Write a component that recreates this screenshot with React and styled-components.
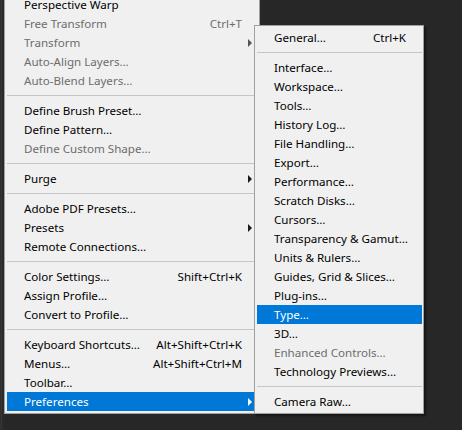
import React from "react";
import styled, { createGlobalStyle } from "styled-components";

const GlobalStyle = createGlobalStyle`
  html, body {
    margin: 0;
    padding: 0;
    background: #272727;
    overflow: hidden;
  }
  body {
    font-family: "Noto Sans", "Open Sans", sans-serif;
    font-size: 11.6px;
  }
`;

const Stage = styled.div`
  display: flex;
  padding-left: 4px;
  margin-top: -8px;
  height: 438px;
  background: linear-gradient(90deg, #2e2e2e 0 1px, #353535 1px 2px, #2a2a2a 2px 4px, transparent 4px);
`;

const MenuAnchor = styled.div`
  position: relative;
  align-self: flex-start;
`;

const Menu = styled.div`
  box-sizing: border-box;
  width: ${(p) => p.$width}px;
  background: #f0f0f0;
  border: 1px solid #a0a0a0;
  padding: 2px ${(p) => p.$padRight}px 2px 2px;
  display: flex;
  flex-direction: column;
`;

const SubMenu = styled(Menu)`
  position: absolute;
  left: 250px;
  top: 33px;
  box-shadow: 2px 2px 2px rgba(0, 0, 0, 0.45);
`;

const Row = styled.div`
  display: flex;
  align-items: center;
  height: 19px;
  padding-left: 17px;
  color: ${(p) => (p.$active ? "#ffffff" : p.$disabled ? "#6d6d6d" : "#000")};
  background: ${(p) => (p.$active ? "#0078d7" : "transparent")};
  white-space: nowrap;
`;

const Label = styled.span`
  flex: 1;
  line-height: 19px;
`;

const Shortcut = styled.span`
  line-height: 19px;
`;

const ArrowCell = styled.span`
  width: ${(p) => p.$w}px;
  display: flex;
  align-items: center;
  padding-left: 6px;
  box-sizing: border-box;
`;

const Triangle = styled.span`
  width: 0;
  height: 0;
  border-top: 4px solid transparent;
  border-bottom: 4px solid transparent;
  border-left: 4px solid ${(p) => (p.$active ? "#fff" : p.$disabled ? "#555" : "#1a1a1a")};
`;

const Separator = styled.div`
  height: 11px;
  display: flex;
  align-items: center;
  &::after {
    content: "";
    flex: 1;
    height: 1px;
    background: #c6c6c6;
  }
`;

const mainItems = [
  { label: "Perspective Warp" },
  { label: "Free Transform", shortcut: "Ctrl+T", disabled: true },
  { label: "Transform", sub: true, disabled: true },
  { label: "Auto-Align Layers…", disabled: true },
  { label: "Auto-Blend Layers…", disabled: true },
  "sep",
  { label: "Define Brush Preset…" },
  { label: "Define Pattern…" },
  { label: "Define Custom Shape…", disabled: true },
  "sep",
  { label: "Purge", sub: true },
  "sep",
  { label: "Adobe PDF Presets…" },
  { label: "Presets", sub: true },
  { label: "Remote Connections…" },
  "sep",
  { label: "Color Settings…", shortcut: "Shift+Ctrl+K" },
  { label: "Assign Profile…" },
  { label: "Convert to Profile…" },
  "sep",
  { label: "Keyboard Shortcuts…", shortcut: "Alt+Shift+Ctrl+K" },
  { label: "Menus…", shortcut: "Alt+Shift+Ctrl+M" },
  { label: "Toolbar…" },
  { label: "Preferences", sub: true, active: true },
];

const prefItems = [
  { label: "General…", shortcut: "Ctrl+K" },
  "sep",
  { label: "Interface…" },
  { label: "Workspace…" },
  { label: "Tools…" },
  { label: "History Log…" },
  { label: "File Handling…" },
  { label: "Export…" },
  { label: "Performance…" },
  { label: "Scratch Disks…" },
  { label: "Cursors…" },
  { label: "Transparency & Gamut…" },
  { label: "Units & Rulers…" },
  { label: "Guides, Grid & Slices…" },
  { label: "Plug-ins…" },
  { label: "Type…", active: true },
  { label: "3D…" },
  { label: "Enhanced Controls…", disabled: true },
  { label: "Technology Previews…" },
  "sep",
  { label: "Camera Raw…" },
];

function MenuItems({ items, arrowWidth }) {
  return items.map((item, i) =>
    item === "sep" ? (
      <Separator key={i} />
    ) : (
      <Row key={i} $active={item.active} $disabled={item.disabled}>
        <Label>{item.label}</Label>
        {item.shortcut && <Shortcut>{item.shortcut}</Shortcut>}
        <ArrowCell $w={arrowWidth}>
          {item.sub && <Triangle $active={item.active} $disabled={item.disabled} />}
        </ArrowCell>
      </Row>
    )
  );
}

export default function App() {
  return (
    <>
      <GlobalStyle />
      <Stage>
        <MenuAnchor>
          <Menu $width={256} $padRight={4}>
            <MenuItems items={mainItems} arrowWidth={13} />
          </Menu>
          <SubMenu $width={170} $padRight={1}>
            <MenuItems items={prefItems} arrowWidth={16} />
          </SubMenu>
        </MenuAnchor>
      </Stage>
    </>
  );
}
